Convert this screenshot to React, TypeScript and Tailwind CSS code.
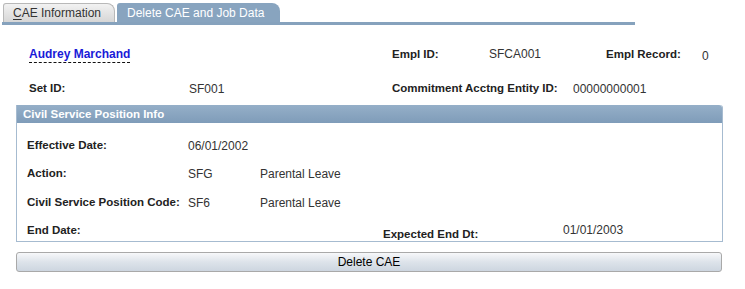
const font = { fontFamily: '"Liberation Sans", Arial, sans-serif' };

const Label = ({ w, children, className = "" }: { w: string; children: React.ReactNode; className?: string }) => (
  <span className={`${w} shrink-0 font-bold text-[11.5px] text-[#222] ${className}`}>{children}</span>
);

const Value = ({ w, children, className = "" }: { w: string; children: React.ReactNode; className?: string }) => (
  <span className={`${w} shrink-0 text-[#333] ${className}`}>{children}</span>
);

export default function App() {
  return (
    <div className="w-[745px] h-[289px] bg-white text-[12px] leading-[16px]" style={font}>
      {/* tabs */}
      <div className="pt-[3px] pl-[3px] flex items-end gap-[2px]">
        <div className="w-[112px] h-[19px] flex items-center pl-[9px] text-[#333] text-[12px] bg-gradient-to-b from-[#f2f2f2] to-[#d6d6d6] border border-b-0 border-[#b8b8b8] rounded-tl-[3px] rounded-tr-[8px]">
          <span className="underline underline-offset-2">C</span>AE Information
        </div>
        <div className="w-[163px] h-[19px] flex items-center pl-[10px] text-white text-[12px] bg-[#88a4bf] rounded-tl-[3px] rounded-tr-[8px]">
          Delete CAE and Job Data
        </div>
      </div>
      <div className="ml-[2px] w-[633px] h-[3px] bg-[#86a2bd]" />

      {/* header fields */}
      <div className="pl-[29px] mt-[21px] flex">
        <a className="w-[363px] shrink-0 font-bold text-[#1a1ad8]">
          <span className="border-b border-dashed border-[#111] pb-[1px]">Audrey Marchand</span>
        </a>
        <Label w="w-[97px]">Empl ID:</Label>
        <Value w="w-[117px]">SFCA001</Value>
        <Label w="w-[96px]">Empl Record:</Label>
        <Value w="w-[20px]" className="mt-[2px]">0</Value>
      </div>
      <div className="pl-[29px] mt-[16px] flex">
        <Label w="w-[160px]">Set ID:</Label>
        <Value w="w-[203px]" className="mt-[1px]">SF001</Value>
        <Label w="w-[181px]">Commitment Acctng Entity ID:</Label>
        <Value w="w-[100px]" className="mt-[1px]">00000000001</Value>
      </div>

      {/* panel */}
      <div className="ml-[16px] mt-[8px] w-[707px] border border-[#a6bbd0] border-t-0 rounded-tr-[3px]">
        <div className="h-[18px] flex items-center pl-[6px] font-bold text-[11.5px] text-white bg-gradient-to-b from-[#95afc8] to-[#7f9cb9] rounded-tr-[3px]">
          Civil Service Position Info
        </div>
        <div className="pl-[10px] pt-[14px] h-[118px] flex flex-col">
          <div className="flex">
            <Label w="w-[161px]">Effective Date:</Label>
            <Value w="w-[80px]" className="mt-[1px]">06/01/2002</Value>
          </div>
          <div className="flex mt-[11px]">
            <Label w="w-[161px]">Action:</Label>
            <Value w="w-[72px]" className="mt-[1px]">SFG</Value>
            <Value w="w-[100px]" className="mt-[1px]">Parental Leave</Value>
          </div>
          <div className="flex mt-[12px]">
            <Label w="w-[161px]">Civil Service Position Code:</Label>
            <Value w="w-[72px]" className="mt-[1px]">SF6</Value>
            <Value w="w-[100px]" className="mt-[1px]">Parental Leave</Value>
          </div>
          <div className="flex mt-[11px]">
            <Label w="w-[356px]">End Date:</Label>
            <Label w="w-[180px]" className="mt-[4px]">Expected End Dt:</Label>
            <Value w="w-[80px]">01/01/2003</Value>
          </div>
        </div>
      </div>

      {/* button */}
      <button className="ml-[16px] mt-[10px] w-[706px] h-[20px] flex items-center justify-center text-[12px] text-black border border-[#a9a9a9] rounded-[3px] bg-gradient-to-b from-[#f7f8fa] via-[#dde3ea] to-[#cdd6e0]">
        Delete CAE
      </button>
    </div>
  );
}
